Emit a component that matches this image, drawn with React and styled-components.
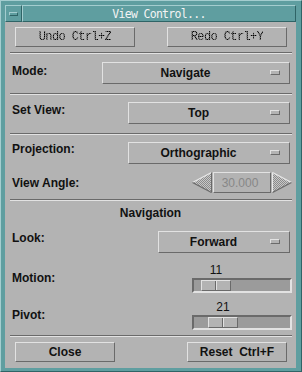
import React from 'react';
import styled, { createGlobalStyle } from 'styled-components';

const BG = '#b3b3b3';
const LIGHT = '#e2e2e2';
const DARK = '#6a6a6a';
const TEAL = '#5f9ea0';
const TEAL_L = '#a4cdcf';
const TEAL_D = '#2f6466';
const SANS = '"Liberation Sans", Arial, Helvetica, sans-serif';
const MONO = '"Liberation Mono", "DejaVu Sans Mono", monospace';

const Global = createGlobalStyle`
  html, body { margin: 0; padding: 0; background: ${TEAL}; }
  body { width: 302px; height: 372px; overflow: hidden; font-family: ${SANS}; }
  * { box-sizing: border-box; }
`;

const Frame = styled.div`
  width: 302px;
  height: 372px;
  background: ${TEAL};
  border-style: solid;
  border-width: 1px;
  border-color: ${TEAL_L} ${TEAL_D} ${TEAL_D} ${TEAL_L};
  padding: 4px 5px 3px 4px;
  display: flex;
  flex-direction: column;
`;

const TitleBar = styled.div`
  height: 17px;
  display: flex;
  flex: none;
`;

const MenuButton = styled.div`
  width: 17px;
  height: 17px;
  border-style: solid;
  border-width: 1px;
  border-color: ${TEAL_L} ${TEAL_D} ${TEAL_D} ${TEAL_L};
  display: flex;
  align-items: center;
  justify-content: center;
`;

const MenuBar = styled.div`
  width: 9px;
  height: 4px;
  border-style: solid;
  border-width: 1px;
  border-color: ${TEAL_L} ${TEAL_D} ${TEAL_D} ${TEAL_L};
`;

const TitleArea = styled.div`
  flex: 1;
  border-style: solid;
  border-width: 1px;
  border-color: ${TEAL_L} ${TEAL_D} ${TEAL_D} ${TEAL_L};
  display: flex;
  align-items: center;
  justify-content: center;
  color: #f4f4f4;
  font-family: "DejaVu Sans Mono", monospace;
  font-size: 11.5px;
  letter-spacing: -0.7px;
  padding-top: 1px;
`;

const Content = styled.div`
  flex: 1;
  background: ${BG};
  display: flex;
  flex-direction: column;
`;

const ButtonRow = styled.div`
  display: flex;
  justify-content: space-between;
  padding: 0 9px 0 10px;
  margin-top: ${p => p.$mt}px;
`;

const PushButton = styled.div`
  width: ${p => p.$w}px;
  height: 20px;
  border-style: solid;
  border-width: 1px;
  border-color: ${LIGHT} ${DARK} ${DARK} ${LIGHT};
  display: flex;
  align-items: center;
  justify-content: center;
  font-size: 12px;
  font-weight: bold;
  color: #111;
  white-space: pre;
`;

const Stipple = styled.span`
  font-family: ${MONO};
  font-size: 12px;
  letter-spacing: -0.6px;
  font-weight: normal;
  color: transparent;
  background: repeating-conic-gradient(#000 0% 25%, #5a5a5a 0% 50%) 0 0 / 2px 2px;
  -webkit-background-clip: text;
  background-clip: text;
`;

const Separator = styled.div`
  height: 2px;
  margin: ${p => p.$mt}px 4px 0 5px;
  border-top: 1px solid ${DARK};
  border-bottom: 1px solid ${LIGHT};
`;

const Row = styled.div`
  display: flex;
  align-items: flex-start;
  padding: 0 4px 0 7px;
  margin-top: ${p => p.$mt}px;
  height: ${p => p.$h}px;
`;

const Label = styled.div`
  font-size: 12px;
  font-weight: bold;
  line-height: 14px;
  color: #111;
  margin-top: ${p => p.$mt ?? 1}px;
  white-space: nowrap;
`;

const OptionButton = styled.div`
  margin-left: auto;
  margin-right: 2px;
  width: ${p => p.$w}px;
  height: 22px;
  border-style: solid;
  border-width: 1px;
  border-color: ${LIGHT} ${DARK} ${DARK} ${LIGHT};
  display: flex;
  align-items: center;
  padding-right: 9px;
`;

const OptionText = styled.div`
  flex: 1;
  text-align: center;
  font-size: 12px;
  font-weight: bold;
  color: #111;
`;

const Indicator = styled.div`
  width: 10px;
  height: 5px;
  margin-left: 2px;
  margin-bottom: 1px;
  border-style: solid;
  border-width: 1px;
  border-color: ${LIGHT} ${DARK} ${DARK} ${LIGHT};
`;

const Spinner = styled.div`
  margin-left: auto;
  width: 100px;
  height: 21px;
  display: flex;
  gap: 1px;
`;

const Field = styled.div`
  width: 58px;
  height: 21px;
  border-style: solid;
  border-width: 1px;
  border-color: ${LIGHT} ${DARK} ${DARK} ${LIGHT};
  display: flex;
  align-items: center;
  justify-content: center;
  padding-right: 4px;
  font-size: 12px;
  color: #878787;
`;

const Heading = styled.div`
  margin-top: ${p => p.$mt}px;
  height: 16px;
  line-height: 16px;
  text-align: center;
  font-size: 12px;
  font-weight: bold;
  color: #111;
`;

const SliderBox = styled.div`
  margin-left: auto;
  width: 100px;
  display: flex;
  flex-direction: column;
`;

const SliderValue = styled.div`
  height: 14px;
  line-height: 14px;
  font-size: 12px;
  color: #111;
  width: 30px;
  text-align: center;
`;

const Trough = styled.div`
  margin-top: 1px;
  height: 15px;
  background: #9b9b9b;
  border-style: solid;
  border-width: 2px;
  border-color: ${DARK} ${LIGHT} ${LIGHT} ${DARK};
  display: flex;
`;

const Thumb = styled.div`
  width: 30px;
  height: 11px;
  background: ${BG};
  border-style: solid;
  border-width: 1px;
  border-color: ${LIGHT} ${DARK} ${DARK} ${LIGHT};
  display: flex;
  justify-content: center;
`;

const Groove = styled.div`
  width: 2px;
  height: 100%;
  border-left: 1px solid ${DARK};
  border-right: 1px solid ${LIGHT};
`;

const ArrowSvg = styled.svg`
  display: block;
  flex: none;
`;

function Arrow({ dir }) {
  const id = `stip-${dir}`;
  if (dir === 'left') {
    return (
      <ArrowSvg width="20" height="21" viewBox="0 0 20 21">
        <defs>
          <pattern id={id} width="2" height="2" patternUnits="userSpaceOnUse">
            <rect width="2" height="2" fill="#c8c8c8" />
            <rect width="1" height="1" fill="#8c8c8c" />
            <rect x="1" y="1" width="1" height="1" fill="#8c8c8c" />
          </pattern>
        </defs>
        <polygon points="0.5,10.5 19.5,0.5 19.5,20.5" fill={`url(#${id})`} />
        <line x1="0.5" y1="10.5" x2="19.5" y2="0.5" stroke="#e8e8e8" strokeWidth="1.2" />
        <line x1="19.5" y1="0.5" x2="19.5" y2="20.5" stroke={DARK} strokeWidth="1" />
        <line x1="19.5" y1="20.5" x2="0.5" y2="10.5" stroke={DARK} strokeWidth="1.2" />
      </ArrowSvg>
    );
  }
  return (
    <ArrowSvg width="20" height="21" viewBox="0 0 20 21">
      <defs>
        <pattern id={id} width="2" height="2" patternUnits="userSpaceOnUse">
          <rect width="2" height="2" fill="#c8c8c8" />
          <rect width="1" height="1" fill="#8c8c8c" />
          <rect x="1" y="1" width="1" height="1" fill="#8c8c8c" />
        </pattern>
      </defs>
      <polygon points="0.5,0.5 19.5,10.5 0.5,20.5" fill={`url(#${id})`} />
      <line x1="0.5" y1="0.5" x2="0.5" y2="20.5" stroke="#e8e8e8" strokeWidth="1" />
      <line x1="0.5" y1="0.5" x2="19.5" y2="10.5" stroke="#e8e8e8" strokeWidth="1.2" />
      <line x1="19.5" y1="10.5" x2="0.5" y2="20.5" stroke={DARK} strokeWidth="1.2" />
    </ArrowSvg>
  );
}

function OptionMenu({ width, value }) {
  return (
    <OptionButton $w={width}>
      <OptionText>{value}</OptionText>
      <Indicator />
    </OptionButton>
  );
}

function Slider({ value, max = 100 }) {
  const travel = 96 - 30;
  const offset = Math.round((value / max) * travel);
  return (
    <SliderBox>
      <SliderValue style={{ marginLeft: offset + 2 }}>{value}</SliderValue>
      <Trough>
        <Thumb style={{ marginLeft: offset }}>
          <Groove />
        </Thumb>
      </Trough>
    </SliderBox>
  );
}

export default function App() {
  return (
    <>
      <Global />
      <Frame>
        <TitleBar>
          <MenuButton>
            <MenuBar />
          </MenuButton>
          <TitleArea>View Control...</TitleArea>
        </TitleBar>
        <Content>
          <ButtonRow $mt={5}>
            <PushButton $w={120}><Stipple>Undo Ctrl+Z</Stipple></PushButton>
            <PushButton $w={120}><Stipple>Redo Ctrl+Y</Stipple></PushButton>
          </ButtonRow>
          <Separator $mt={5} />
          <Row $mt={8} $h={22}>
            <Label $mt={2}>Mode:</Label>
            <OptionMenu width={188} value="Navigate" />
          </Row>
          <Separator $mt={9} />
          <Row $mt={7} $h={22}>
            <Label $mt={1}>Set View:</Label>
            <OptionMenu width={162} value="Top" />
          </Row>
          <Separator $mt={9} />
          <Row $mt={7} $h={22}>
            <Label $mt={0}>Projection:</Label>
            <OptionMenu width={162} value="Orthographic" />
          </Row>
          <Row $mt={8} $h={21}>
            <Label $mt={4}>View Angle:</Label>
            <Spinner>
              <Arrow dir="left" />
              <Field>30.000</Field>
              <Arrow dir="right" />
            </Spinner>
          </Row>
          <Separator $mt={6} />
          <Heading $mt={4}>Navigation</Heading>
          <Row $mt={10} $h={22}>
            <Label $mt={0}>Look:</Label>
            <OptionMenu width={132} value="Forward" />
          </Row>
          <Row $mt={10} $h={30}>
            <Label $mt={8}>Motion:</Label>
            <Slider value={11} />
          </Row>
          <Row $mt={7} $h={30}>
            <Label $mt={8}>Pivot:</Label>
            <Slider value={21} />
          </Row>
          <Separator $mt={5} />
          <ButtonRow $mt={5}>
            <PushButton $w={100}>Close</PushButton>
            <PushButton $w={100}>{'Reset  Ctrl+F'}</PushButton>
          </ButtonRow>
        </Content>
      </Frame>
    </>
  );
}
